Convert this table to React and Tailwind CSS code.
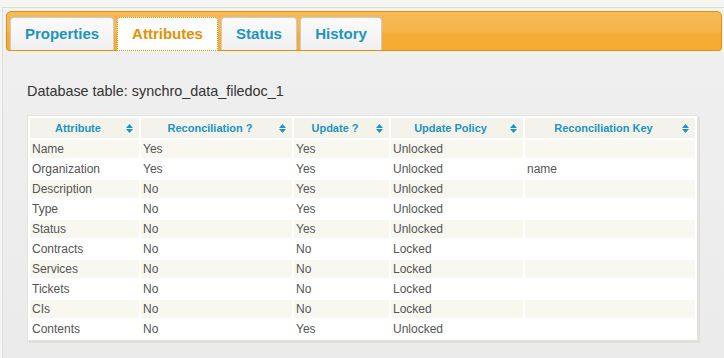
const tabs = [
  { label: "Properties", width: "w-[104px]" },
  { label: "Attributes", width: "w-[101px]", active: true },
  { label: "Status", width: "w-[76px]" },
  { label: "History", width: "w-[82px]" },
];

const columns = [
  { label: "Attribute", width: "w-[109px]" },
  { label: "Reconciliation ?", width: "w-[151px]" },
  { label: "Update ?", width: "w-[95px]" },
  { label: "Update Policy", width: "w-[132px]" },
  { label: "Reconciliation Key", width: "w-[170px]" },
];

const rows = [
  ["Name", "Yes", "Yes", "Unlocked", ""],
  ["Organization", "Yes", "Yes", "Unlocked", "name"],
  ["Description", "No", "Yes", "Unlocked", ""],
  ["Type", "No", "Yes", "Unlocked", ""],
  ["Status", "No", "Yes", "Unlocked", ""],
  ["Contracts", "No", "No", "Locked", ""],
  ["Services", "No", "No", "Locked", ""],
  ["Tickets", "No", "No", "Locked", ""],
  ["CIs", "No", "No", "Locked", ""],
  ["Contents", "No", "Yes", "Unlocked", ""],
];

function SortIcon() {
  return (
    <svg width="7" height="9" viewBox="0 0 7 9" className="shrink-0 mr-[6px]">
      <path d="M3.5 0 L7 4 L0 4 Z" fill="#1c94c4" />
      <path d="M0 5 L7 5 L3.5 9 Z" fill="#1c94c4" />
    </svg>
  );
}

export default function App() {
  return (
    <div
      className="w-[724px] h-[358px] overflow-hidden bg-[#f5f5f1] pt-[7px]"
      style={{ fontFamily: '"Liberation Sans", Arial, sans-serif' }}
    >
      <div className="h-full border-t border-[#dcdcd8] ml-[2px] border-l border-l-[#dddddd] bg-[linear-gradient(#f3f3f1_0px,#f3f3f1_43px,#efefef_44px,#ebebeb_100%)]">
        {/* Tab bar */}
        <div className="mt-[3px] ml-[3px] mr-[2px] h-[40px] rounded-t-[5px] rounded-b-[3px] border border-[#e78f08] bg-[linear-gradient(#f7ba58,#f6b54c_50%,#f5ac36_58%,#f5ab34)] flex items-end gap-[3px] pl-[3px]">
          {tabs.map((t) => (
            <div
              key={t.label}
              className={
                t.active
                  ? `${t.width} h-[34px] -mb-[1px] rounded-t-[4px] border border-dotted border-[#e78f08] bg-white flex items-center justify-center text-[15px] font-bold text-[#eb8f00]`
                  : `${t.width} h-[33px] rounded-t-[4px] border border-b-0 border-[#cccccc] bg-[linear-gradient(#fafafa,#f6f6f6_50%,#f0f0f0)] flex items-center justify-center text-[15px] font-bold text-[#1c94c4]`
              }
            >
              {t.label}
            </div>
          ))}
        </div>

        {/* Content */}
        <div className="pl-[24px] pt-[32px]">
          <p className="text-[14.4px] leading-[16px] text-[#333333]">
            Database table: synchro_data_filedoc_1
          </p>

          <div className="mt-[16px] w-[671px] bg-white border border-[#e4e4de] shadow-[2px_2px_0_#e0e0da]">
            <table className="table-fixed border-separate border-spacing-[2px] w-[669px]">
              <colgroup>
                {columns.map((c) => (
                  <col key={c.label} className={c.width} />
                ))}
              </colgroup>
              <thead>
                <tr>
                  {columns.map((c) => (
                    <th key={c.label} className="h-[20px] p-0 bg-[#f3f3ec]">
                      <div className="flex items-center">
                        <span className="flex-1 text-center text-[11px] font-bold text-[#1c94c4]">
                          {c.label}
                        </span>
                        <SortIcon />
                      </div>
                    </th>
                  ))}
                </tr>
              </thead>
              <tbody>
                {rows.map((r, i) => (
                  <tr key={r[0]}>
                    {r.map((cell, j) => (
                      <td
                        key={j}
                        className={`h-[18px] p-0 pl-[2px] text-[12px] leading-[18px] text-[#555555] ${
                          i % 2 === 0 ? "bg-[#f8f8f1]" : "bg-white"
                        }`}
                      >
                        {cell}
                      </td>
                    ))}
                  </tr>
                ))}
              </tbody>
            </table>
          </div>
        </div>
      </div>
    </div>
  );
}
